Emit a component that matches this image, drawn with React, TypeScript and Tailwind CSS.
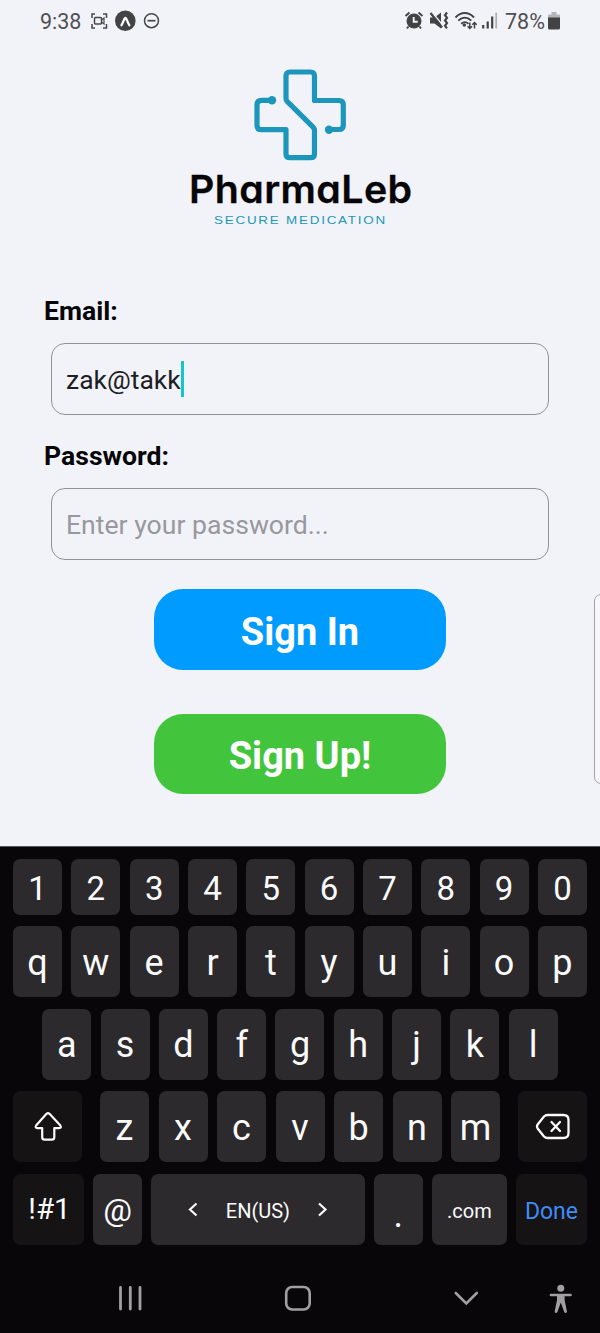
import React from 'react';

function StatusBar() {
  return (
    <div className="flex h-[42px] items-center pl-[40px] pr-[39px] text-[21.500px] leading-none text-[#505052]">
      <span className="w-[49.500px] pt-[1px]">9:38</span>
      <svg width="72" height="24" viewBox="90 9 72 24" fill="none" stroke="#48484a" strokeWidth="1.5">
        <path d="M95 14h-3v4M103 14h3.500v4M95 28h-3v-4M103 28h3.500v-4" />
        <rect x="94.500" y="17.500" width="7" height="6.500" rx="1" />
        <path d="M101.500 20l2.500-2v6l-2.500-2" strokeWidth="1.200" />
        <circle cx="125.300" cy="20.700" r="10.300" fill="#434345" stroke="none" />
        <path d="M121.500 25.200c1.800-2.500 2.600-7.200 3.900-7.200s2.100 4.700 3.900 7.200" stroke="#fff" strokeWidth="2.300" strokeLinecap="round" />
        <circle cx="151.500" cy="20.700" r="7" />
        <path d="M147.500 20.700h8" strokeWidth="1.700" />
      </svg>
      <svg className="ml-auto" width="98" height="24" viewBox="404 9 98 24" fill="none" stroke="#434345">
        <circle cx="414" cy="21" r="7.500" fill="#434345" stroke="none" />
        <path d="M405.500 16l4-3.500M422.500 16l-4-3.500M408.500 26.500l-1.500 2M419.500 26.500l1.500 2" strokeWidth="1.900" />
        <path d="M413.700 17v4.800h4" stroke="#f2f3f9" strokeWidth="1.900" />
        <path d="M430 17.500h4.500l6.500-5v16l-6.500-5h-4.500z" fill="#434345" stroke="none" />
        <path d="M431.500 11.500l11 13.500" stroke="#f2f3f9" strokeWidth="1.400" />
        <path d="M430.500 13l11.500 14.500" strokeWidth="2.200" />
        <path d="M447 12.500l-2 2.700 2 2.600-2 2.700 2 2.600-2 2.700 2 2.600" strokeWidth="2.200" />
        <path d="M455.500 17.500c5.500-6 13-6 18.500 0M458.300 20.700c4-4 9-4 13 0M461.200 23.700c2.300-2 5-2 7.300 0" strokeWidth="1.900" />
        <circle cx="464.300" cy="25" r="1.800" fill="#434345" stroke="none" />
        <path d="M469.800 22.500v6M467.600 26.200l2.200 2.300 2.200-2.300M474.500 28.500v-6M472.300 24.800l2.200-2.300 2.200 2.300" strokeWidth="1.500" />
        <path d="M483.200 28.500v-3.500M487.700 28.500v-7M492.200 28.500v-12" strokeWidth="2.200" />
        <path d="M496.200 28.500v-15.800" stroke="#aeaeb3" strokeWidth="1.800" />
      </svg>
      <span className="ml-[3px] w-[42px] pt-[1px]">78%</span>
      <svg width="14" height="20" viewBox="0 0 14 20">
        <path d="M4.500 1h5v2.500H12a1 1 0 0 1 1 1V7H1V4.500a1 1 0 0 1 1-1h2.500z" fill="#b5b5b9" />
        <path d="M1 6.500h12v10.500a1.500 1.500 0 0 1-1.500 1.500h-9A1.500 1.500 0 0 1 1 17z" fill="#434345" />
      </svg>
    </div>
  );
}

function Logo() {
  return (
    <svg className="mx-auto block" width="240" height="175" viewBox="180 60 240 175">
      <g fill="none" stroke="#1c97bb" strokeWidth="5.200" strokeLinejoin="round" strokeLinecap="round">
        <path d="M272 100.300h-10.500q-4.500 0-4.500 4.500v20.400q0 4.500 4.500 4.500h24.500v24q0 4 4 4h20.500q4 0 4-4v-23.200q0-2-1.400-3.400L287.400 101.700q-1.400-1.400-1.400-3.200V76q0-4 4-4h20.500q4 0 4 4v24.500h24.500q4.300 0 4.300 4.300v20.400q0 4.300-4.300 4.300h-10" />
      </g>
      <circle cx="272" cy="100.300" r="4.200" fill="#1c97bb" />
      <circle cx="329" cy="129.700" r="4.200" fill="#1c97bb" />
      <text x="189" y="202.500" fontSize="38" fontWeight="600" textLength="223.500" lengthAdjust="spacingAndGlyphs" fill="#060608" stroke="#060608" strokeWidth="0.300" strokeLinejoin="round" className="font-['Inter',sans-serif] tracking-[0.4px] [font-feature-settings:'cv11']">PharmaLeb</text>
      <text x="214" y="223.700" fontSize="10.500" textLength="173" lengthAdjust="spacingAndGlyphs" fill="#1c97bb" className="font-['Liberation_Sans',sans-serif] tracking-[1.400px]">SECURE MEDICATION</text>
    </svg>
  );
}

function Key({ label, className = '' }: { label: React.ReactNode; className?: string }) {
  return (
    <button className={`flex h-full items-center justify-center rounded-[7px] leading-none ${className}`}>
      {label}
    </button>
  );
}

const keyStyle = 'w-[49px] shrink-0 bg-[#2c2a2d]';

function Letters({ row }: { row: string }) {
  return (
    <>
      {row.split('').map((c) => (
        <Key key={c} label={<span className="pt-[1.500px]">{c}</span>} className={keyStyle} />
      ))}
    </>
  );
}

function Keyboard() {
  return (
    <div className="flex h-[487px] flex-col border-t border-[#55555a] bg-[#080609] px-[13px] pt-[12px] text-[36px] text-[#fafafa]">
      <div className="mb-[11.300px] flex h-[56px] justify-between text-[33px]">
        {'1234567890'.split('').map((c) => (
          <Key key={c} label={<span className="pt-[3px]">{c}</span>} className={keyStyle} />
        ))}
      </div>
      <div className="flex flex-col gap-[11.600px]">
        <div className="flex h-[71px] justify-between">
          <Letters row="qwertyuiop" />
        </div>
        <div className="flex h-[71px] justify-between px-[29.300px]">
          <Letters row="asdfghjkl" />
        </div>
        <div className="flex h-[71px] justify-between">
          <Key
            className="w-[69px] bg-[#151314]"
            label={
              <svg className="mt-[1px]" width="30" height="32" viewBox="0 0 30 32" fill="none" stroke="#fafafa" strokeWidth="2.200" strokeLinejoin="round">
                <path d="M13.500 2.800q1.500-1.200 3 0l10.700 11.400q1.800 3-1.200 3h-4.700v9q0 2.500-2.500 2.500h-7.100q-2.500 0-2.500-2.500v-9H4.500q-3 0-1.200-3z" />
              </svg>
            }
          />
          <div className="flex w-[400px] justify-between">
            <Letters row="zxcvbnm" />
          </div>
          <Key
            className="w-[69px] bg-[#151314]"
            label={
              <svg className="mt-[1px]" width="36" height="28" viewBox="0 0 36 28" fill="none" stroke="#fafafa" strokeWidth="2.300" strokeLinecap="round" strokeLinejoin="round">
                <path d="M12.500 2H28.500q5 0 5 5v13q0 5-5 5H12.500q-2 0-3.500-1.500l-6-7.500q-2-2.500 0-5L9 3.500Q10.500 2 12.500 2z" />
                <path d="M16.500 9l8.500 9M25 9l-8.500 9" />
              </svg>
            }
          />
        </div>
        <div className="flex h-[71px] justify-between">
          <Key label="!#1" className="w-[71px] bg-[#151314] pl-[2px] pt-[1px] text-[29.500px]" />
          <Key label="@" className={`${keyStyle} text-[32px]`} />
          <div className="flex w-[213.500px] items-center rounded-[7px] bg-[#2c2a2d] text-[20px] leading-none">
            <svg className="ml-[37px]" width="11" height="16" viewBox="0 0 11 16" fill="none" stroke="#fafafa" strokeWidth="2.200">
              <path d="M8.500 1.500L2 7.500l6.500 6" />
            </svg>
            <span className="mt-[3px] flex-1 text-center">EN(US)</span>
            <svg className="mr-[37px]" width="11" height="16" viewBox="0 0 11 16" fill="none" stroke="#fafafa" strokeWidth="2.200">
              <path d="M2 1.500l6.500 6-6.500 6" />
            </svg>
          </div>
          <Key label={<span className="pt-[11px]">.</span>} className={keyStyle} />
          <Key label=".com" className="w-[75px] bg-[#2c2a2d] pt-[3px] text-[20px]" />
          <Key label="Done" className="w-[71px] bg-[#151314] pt-[3px] text-[23px] text-[#3f8cf8]" />
        </div>
      </div>
      <svg className="mt-[23.200px] block shrink-0" width="574" height="60" viewBox="13 1268 574 60" fill="none" stroke="#a09fa1" strokeLinecap="round">
        <path d="M120.500 1287.500v21.500M130.300 1287.500v21.500M140 1287.500v21.500" strokeWidth="2.800" />
        <rect x="286.200" y="1287" width="23.500" height="22.500" rx="6" strokeWidth="2.600" />
        <path d="M455.800 1293l10.500 10.500 10.500-10.500" strokeWidth="2.600" />
        <circle cx="560.800" cy="1288.300" r="3.500" fill="#a09fa1" stroke="none" />
        <path d="M551 1295h19.500" strokeWidth="2.700" />
        <path d="M557 1295h7.600v5l2.300 11.200a1.400 1.400 0 0 1-2.800.6l-3.300-9.300-3.300 9.300a1.400 1.400 0 0 1-2.800-.6l2.300-11.200z" fill="#a09fa1" stroke="none" />
      </svg>
    </div>
  );
}

export default function App() {
  return (
    <div className="relative flex h-[1333px] w-[600px] flex-col overflow-hidden bg-[#f2f3f9] font-['Roboto',sans-serif]">
      <StatusBar />
      <main className="flex flex-1 flex-col pt-[18px]">
        <Logo />
        <form className="flex flex-col">
          <label className="mt-[60px] h-[32px] pl-[44px] text-[26.600px] font-bold leading-[32px] text-[#060608]">Email:</label>
          <div className="mx-[51px] mt-[16px] flex h-[72px] items-center rounded-[14px] border-[1.500px] border-[#929296] pl-[14px] pt-[2px] text-[26.500px] leading-none text-[#1d1d26]">
            <span>zak@takk</span>
            <span className="mb-[3px] h-[36px] w-[3px] bg-[#12c8c4]" />
          </div>
          <label className="mt-[25px] h-[32px] pl-[44px] text-[26.600px] font-bold leading-[32px] text-[#060608]">Password:</label>
          <div className="mx-[51px] mt-[16px] flex h-[72px] items-center rounded-[14px] border-[1.500px] border-[#929296] pl-[14px] pt-[2px] text-[26.600px] leading-none text-[#98989d]">
            Enter your password...
          </div>
          <button type="button" className="mx-auto mt-[29px] h-[81px] w-[292px] rounded-[29px] bg-[#009bff] pt-[4px] text-[38px] font-bold leading-none text-white">Sign In</button>
          <button type="button" className="mx-auto mt-[43.500px] h-[80px] w-[292px] rounded-[29px] bg-[#42c53d] pt-[5px] text-[38px] font-bold leading-none text-white">Sign Up!</button>
        </form>
      </main>
      <div className="absolute left-[594px] top-[594px] h-[190px] w-[20px] rounded-[7px] border-[1.500px] border-[#a4a4a8] bg-[#f8f8fb]" />
      <Keyboard />
    </div>
  );
}
